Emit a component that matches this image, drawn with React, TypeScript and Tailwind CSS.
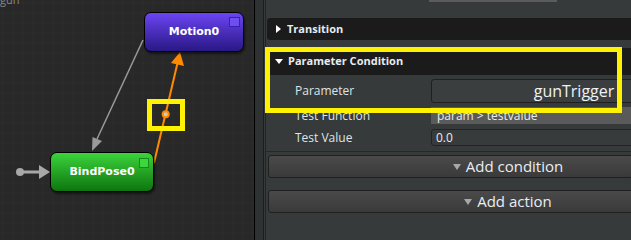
import React from 'react';

// Graph canvas: grid, transition lines and arrows
const GraphCanvas: React.FC = () => (
  <svg width="254" height="240" className="absolute inset-0">
    <defs>
      <pattern id="grid" width="10" height="10" patternUnits="userSpaceOnUse" x="2.5" y="2.5">
        <path d="M0 0H10M0 0V10" stroke="#313131" strokeWidth="1" fill="none" />
      </pattern>
    </defs>
    <rect width="254" height="240" fill="#282828" />
    <rect width="254" height="240" fill="url(#grid)" />

    {/* Motion0 -> BindPose0 */}
    <line x1="143" y1="40" x2="97" y2="139" stroke="#9a9a9a" strokeWidth="1.5" />
    <polygon points="92,151 102,141 92.5,137" fill="#9a9a9a" />

    {/* BindPose0 -> Motion0 */}
    <line x1="154" y1="163" x2="177.5" y2="63" stroke="#ff8a00" strokeWidth="2" />
    <polygon points="180,52 184,66 171,63" fill="#ff8a00" />
    <circle cx="165.7" cy="114.3" r="4" fill="#ff8a00" />
    <circle cx="165.7" cy="114.3" r="2" fill="#c8c8c8" />

    {/* Entry arrow */}
    <circle cx="20" cy="172" r="4" fill="#a8a8a8" />
    <line x1="20" y1="172" x2="40" y2="172" stroke="#a8a8a8" strokeWidth="3" />
    <polygon points="39,165 50,172 39,179" fill="#a8a8a8" />
  </svg>
);

const nodeFont = { fontFamily: '"DejaVu Sans", "Liberation Sans", sans-serif' };

const Graph: React.FC = () => (
  <div className="relative w-[254px] h-[240px] shrink-0 overflow-hidden">
    <GraphCanvas />
    <span className="absolute left-0 top-[-7px] text-[11px] leading-[14px] text-[#8a8a8a]" style={{ fontFamily: '"Open Sans", sans-serif' }}>
      gun
    </span>

    {/* Motion0 node */}
    <div className="absolute left-[144px] top-[12px] w-[100px] h-[40px] rounded-[7px] border border-black bg-gradient-to-b from-[#6c45f3] to-[#2a1786] flex items-center justify-center shadow-[1px_2px_2px_rgba(0,0,0,0.5)]">
      <span className="text-white font-bold text-[11px]" style={nodeFont}>Motion0</span>
      <div className="absolute left-[84px] top-[4px] w-[11px] h-[10px] bg-[#6e4ef0] border border-[#3a22a8]" />
    </div>

    {/* BindPose0 node */}
    <div className="absolute left-[50px] top-[152px] w-[104px] h-[40px] rounded-[7px] border border-black bg-gradient-to-b from-[#3bd43b] to-[#0d760f] flex items-center justify-center shadow-[1px_2px_2px_rgba(0,0,0,0.5)]">
      <span className="text-white font-bold text-[11px]" style={nodeFont}>BindPose0</span>
      <div className="absolute left-[88px] top-[5px] w-[10px] h-[10px] bg-[#3ed63e] border border-[#178a18]" />
    </div>

    {/* highlight marker */}
    <div className="absolute left-[147px] top-[99px] w-[38px] h-[32px] border-[5px] border-[#fff200]" />
  </div>
);

const Inspector: React.FC = () => (
  <div className="relative flex-1 h-[240px] overflow-hidden bg-[#363a3a]" style={{ fontFamily: '"Open Sans", "Liberation Sans", sans-serif' }}>
    <div className="ml-[1px] w-[490px] h-full border-l border-[#232525] flex flex-col">
      {/* cut-off field at top */}
      <div className="ml-[163px] w-[128px] h-[2px] bg-[#5c5c5c]" />

      {/* Transition header */}
      <div className="mt-[16px] ml-[1px] h-[22px] rounded-[3px] bg-[#1b1b1b] flex items-center pl-[9px] gap-[6px]">
        <span className="w-0 h-0 border-y-[4px] border-y-transparent border-l-[5px] border-l-white" />
        <span className="text-[11px] font-bold text-[#e6ecf2]">Transition</span>
      </div>

      {/* Parameter Condition section */}
      <div className="mt-[8px] border-b border-[#262828]">
        <div className="h-[27px] rounded-t-[3px] bg-[#1b1b1b] flex items-center pl-[9px] gap-[5px]">
          <span className="w-0 h-0 border-x-[4px] border-x-transparent border-t-[5px] border-t-white" />
          <span className="text-[11px] font-bold text-[#e6ecf2]">Parameter Condition</span>
        </div>
        <div className="pt-[4px] pb-[5px] flex flex-col">
          <div className="flex items-center h-[24px]">
            <span className="w-[165px] pl-[29px] text-[12px] text-[#dfe4e8]">Parameter</span>
            <div className="w-[286px] h-[24px] rounded-[3px] border border-[#1f2121] bg-[#3b3e3e] flex items-center justify-center">
              <span className="text-[16px] text-[#eef2f5]">gunTrigger</span>
            </div>
          </div>
          <div className="flex items-center h-[17px] mt-[4px]">
            <span className="w-[165px] pl-[29px] text-[12px] text-[#dfe4e8]">Test Function</span>
            <div className="flex-1 h-[17px] bg-[#5a5a5a] flex items-center pl-[6px]">
              <span className="text-[12px] text-[#e8ecef]">param &gt; testvalue</span>
            </div>
          </div>
          <div className="flex items-center h-[17px] mt-[5px]">
            <span className="w-[165px] pl-[29px] text-[12px] text-[#dfe4e8]">Test Value</span>
            <div className="flex-1 h-[17px] rounded-[3px] border border-[#222424] bg-[#383b3b] flex items-center pl-[4px]">
              <span className="text-[12px] text-[#e8ecef]">0.0</span>
            </div>
          </div>
        </div>
      </div>

      {/* Buttons */}
      <button className="mt-[3px] ml-[2px] w-[480px] h-[23px] rounded-[3px] border border-[#1e2020] bg-gradient-to-b from-[#4a4a4a] to-[#3a3a3a] flex items-center justify-center gap-[5px]">
        <span className="w-0 h-0 border-x-[4px] border-x-transparent border-t-[6px] border-t-[#a8a8a8]" />
        <span className="text-[15px] text-[#e8eef4]">Add condition</span>
      </button>
      <button className="mt-[12px] ml-[2px] w-[480px] h-[23px] rounded-[3px] border border-[#1e2020] bg-gradient-to-b from-[#4a4a4a] to-[#3a3a3a] flex items-center justify-center gap-[5px]">
        <span className="w-0 h-0 border-x-[4px] border-x-transparent border-t-[6px] border-t-[#a8a8a8]" />
        <span className="text-[15px] text-[#e8eef4]">Add action</span>
      </button>
    </div>

    {/* highlight around Parameter Condition */}
    <div className="absolute left-[1px] top-[47px] w-[357px] h-[66px] border-[5px] border-[#fff200]" />
  </div>
);

export default function App() {
  return (
    <div className="w-[631px] h-[240px] flex overflow-hidden bg-[#282828]">
      <Graph />
      <div className="w-px h-full bg-black" />
      <div className="w-[9px] h-full bg-[#2f3232] border-r border-[#1c1e1e]" />
      <Inspector />
    </div>
  );
}
